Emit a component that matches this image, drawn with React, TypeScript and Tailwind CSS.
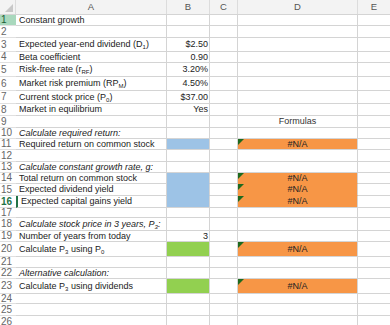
import React from "react";

type Row = {
  n: number;
  h: string;
  a?: React.ReactNode;
  italic?: boolean;
  b?: string;
  bFill?: "blue" | "green";
  d?: string;
  dHead?: boolean;
};

const Sub = ({ children }: { children: React.ReactNode }) => (
  <sub className="text-[6px] align-baseline relative top-[2px]">{children}</sub>
);

const rows: Row[] = [
  { n: 1, h: "h-[11px]", a: "Constant growth" },
  { n: 2, h: "h-[12px]" },
  { n: 3, h: "h-[14px]", a: <>Expected year-end dividend (D<Sub>1</Sub>)</>, b: "$2.50" },
  { n: 4, h: "h-[11px]", a: "Beta coefficient", b: "0.90" },
  { n: 5, h: "h-[14px]", a: <>Risk-free rate (r<Sub>RF</Sub>)</>, b: "3.20%" },
  { n: 6, h: "h-[14px]", a: <>Market risk premium (RP<Sub>M</Sub>)</>, b: "4.50%" },
  { n: 7, h: "h-[13px]", a: <>Current stock price (P<Sub>0</Sub>)</>, b: "$37.00" },
  { n: 8, h: "h-[12px]", a: "Market in equilibrium", b: "Yes" },
  { n: 9, h: "h-[12px]", d: "Formulas", dHead: true },
  { n: 10, h: "h-[11px]", a: "Calculate required return:", italic: true },
  { n: 11, h: "h-[11px]", a: "Required return on common stock", bFill: "blue", d: "#N/A" },
  { n: 12, h: "h-[12px]" },
  { n: 13, h: "h-[11px]", a: "Calculate constant growth rate, g:", italic: true },
  { n: 14, h: "h-[11px]", a: "Total return on common stock", bFill: "blue", d: "#N/A" },
  { n: 15, h: "h-[12px]", a: "Expected dividend yield", bFill: "blue", d: "#N/A" },
  { n: 16, h: "h-[12px]", a: "Expected capital gains yield", bFill: "blue", d: "#N/A" },
  { n: 17, h: "h-[10px]" },
  { n: 18, h: "h-[13px]", a: <>Calculate stock price in 3 years, P<Sub>3</Sub>:</>, italic: true },
  { n: 19, h: "h-[11px]", a: "Number of years from today", b: "3" },
  { n: 20, h: "h-[15px]", a: <>Calculate P<Sub>3</Sub> using P<Sub>0</Sub></>, bFill: "green", d: "#N/A" },
  { n: 21, h: "h-[11px]" },
  { n: 22, h: "h-[11px]", a: "Alternative calculation:", italic: true },
  { n: 23, h: "h-[15px]", a: <>Calculate P<Sub>3</Sub> using dividends</>, bFill: "green", d: "#N/A" },
  { n: 24, h: "h-[10px]" },
  { n: 25, h: "h-[12px]" },
  { n: 26, h: "h-[12px]" },
];

// next row filled too? then hide bottom gridline between them
function sameFillBelow(i: number, key: "b" | "d") {
  const r = rows[i];
  const nx = rows[i + 1];
  if (!nx) return false;
  if (key === "b") return !!r.bFill && r.bFill === nx.bFill;
  return !!r.d && !r.dHead && !!nx.d && !nx.dHead;
}

export default function App() {
  return (
    <div className="w-[390px] h-[325px] overflow-hidden bg-white text-[9px] leading-none text-[#222] font-['Liberation_Sans',Arial,sans-serif]">
      {/* column header */}
      <div className="flex h-[15px] bg-[#f3f3f3] border-b border-[#d4d4d4] text-[#555] text-[9.5px]">
        <div className="w-[16px] relative border-r border-[#dcdcdc]">
          <div className="absolute right-[2px] bottom-[2px] w-0 h-0 border-l-[8px] border-l-transparent border-b-[8px] border-b-[#c8c8c8]" />
        </div>
        <div className="w-[151px] border-r border-[#dcdcdc] flex items-center justify-center">A</div>
        <div className="w-[43px] border-r border-[#dcdcdc] flex items-center justify-center">B</div>
        <div className="w-[28px] border-r border-[#dcdcdc] flex items-center justify-center">C</div>
        <div className="w-[120px] border-r border-[#dcdcdc] flex items-center justify-center">D</div>
        <div className="flex-1 flex items-center justify-center">E</div>
      </div>

      {rows.map((r, i) => {
        const bLink = sameFillBelow(i, "b");
        const dLink = sameFillBelow(i, "d");
        const bBg =
          r.bFill === "blue"
            ? "bg-[#9dc3e6]"
            : r.bFill === "green"
            ? "bg-[#92d050]"
            : "";
        const bBorder = bLink
          ? r.bFill === "blue"
            ? "border-b-[#9dc3e6]"
            : "border-b-[#92d050]"
          : "border-b-[#d4d4d4]";
        const isNA = !!r.d && !r.dHead;
        return (
          <div key={r.n} className={`flex ${r.h}`}>
            <div
              className={`w-[16px] border-b border-b-[#e0e0e0] pl-[1px] flex items-center text-[10px] ${
                r.n === 1
                  ? "bg-[#a9d8bd] text-[#1d5e35]"
                  : r.n === 16
                  ? "text-[#217346] font-bold"
                  : "text-[#666]"
              }`}
            >
              {r.n}
            </div>
            <div
              className={`w-[151px] border-b border-r border-[#d4d4d4] pl-[3px] flex items-center whitespace-nowrap ${
                r.italic ? "italic" : ""
              } ${r.n === 16 ? "border-l-2 border-l-[#217346] pl-[1px]" : ""}`}
            >
              <span>{r.a}</span>
            </div>
            <div
              className={`w-[43px] border-b border-r border-r-[#d4d4d4] ${bBorder} ${bBg} flex items-center justify-end pr-[1px] whitespace-nowrap`}
            >
              {r.b}
            </div>
            <div className="w-[28px] border-b border-r border-[#d4d4d4]" />
            <div
              className={`w-[120px] relative border-b border-r border-r-[#d4d4d4] flex items-center justify-center ${
                isNA
                  ? `bg-[#f79646] ${dLink ? "border-b-[#f79646]" : "border-b-[#d4d4d4]"}`
                  : "border-b-[#d4d4d4]"
              } ${r.dHead ? "text-[#333]" : ""}`}
            >
              {isNA && (
                <div className="absolute left-0 top-0 w-0 h-0 border-t-[6px] border-t-[#1e6a1e] border-r-[6px] border-r-transparent" />
              )}
              {r.d}
            </div>
            <div className="flex-1 border-b border-[#d4d4d4]" />
          </div>
        );
      })}
    </div>
  );
}
